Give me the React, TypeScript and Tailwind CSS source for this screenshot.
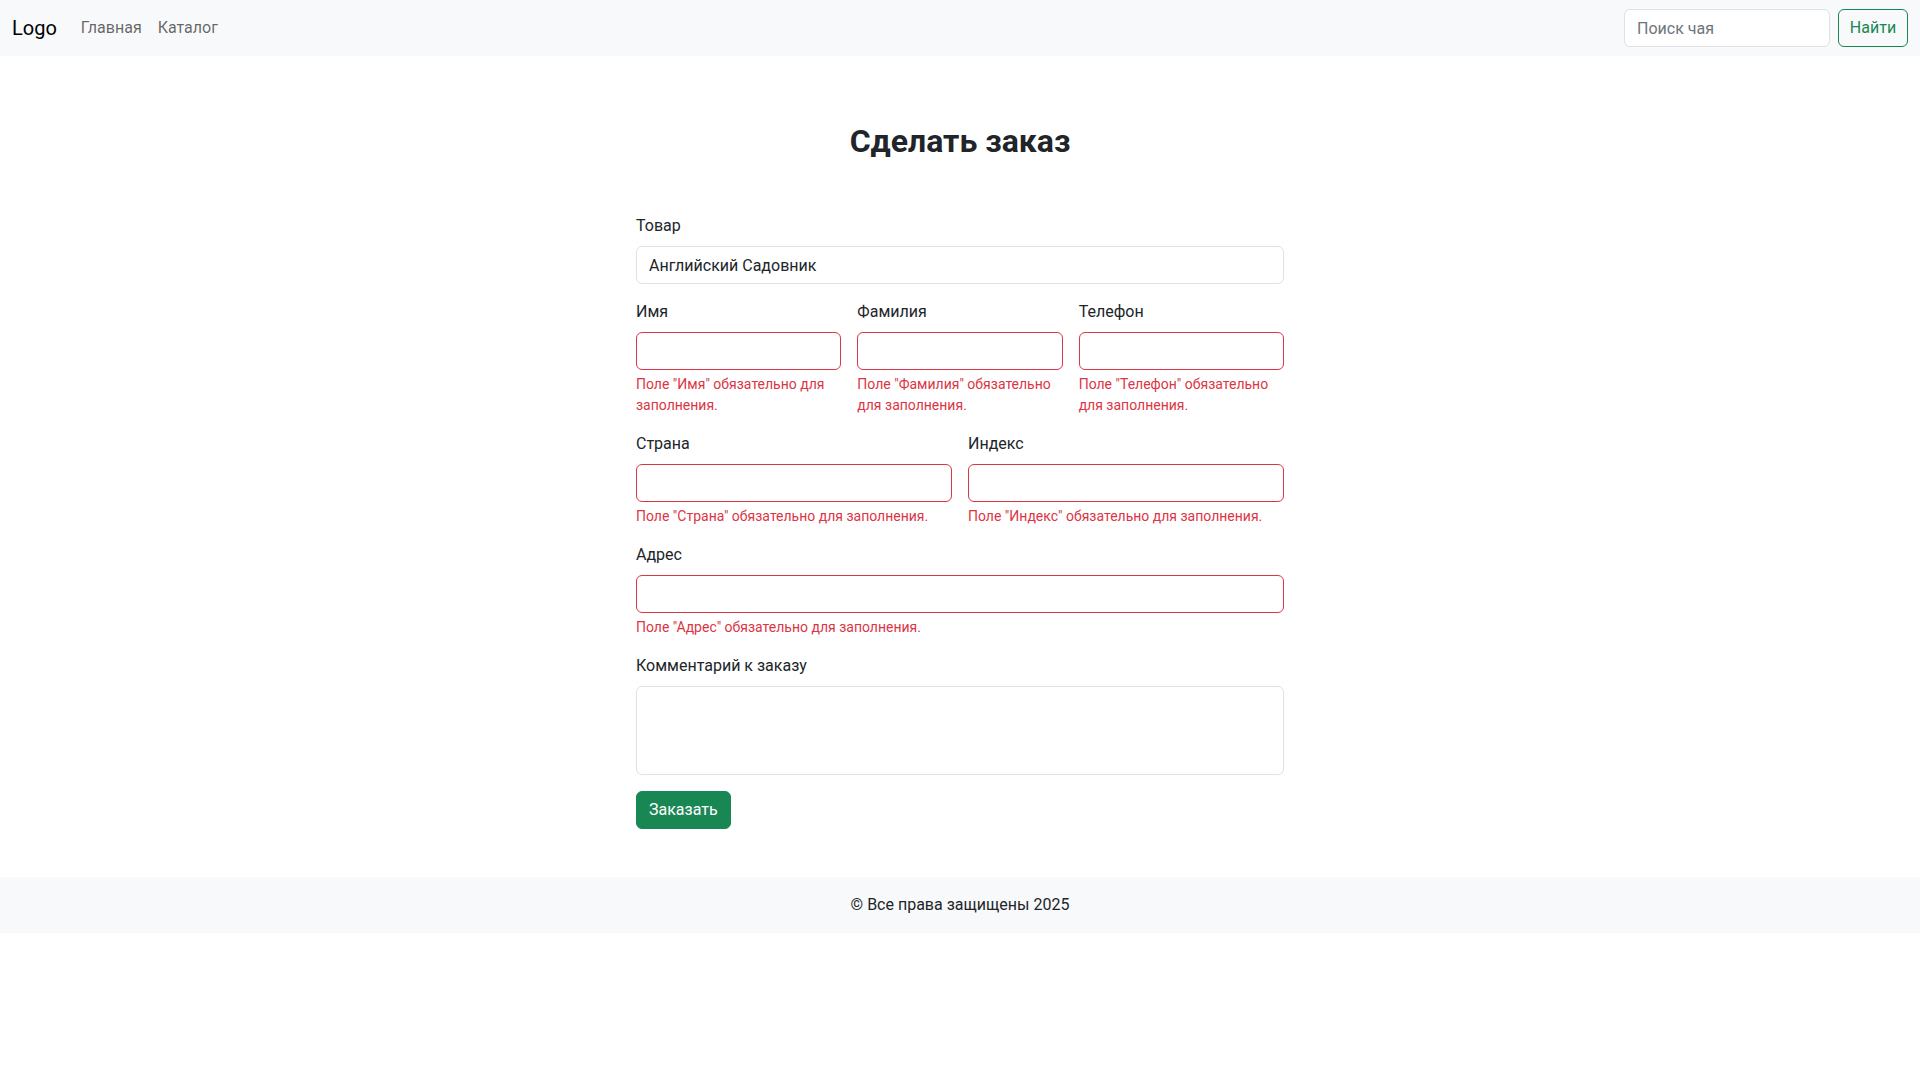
import React from "react";

const font = { fontFamily: '"Segoe UI", Roboto, "Noto Sans", "Liberation Sans", sans-serif' };

function Field({ label, error }: { label: string; error: string }) {
  return (
    <div className="flex flex-col">
      <label className="block mb-2 leading-6 text-base text-[#212529]">{label}</label>
      <input
        type="text"
        className="block w-full h-[38px] px-3 border border-[#dc3545] rounded-md bg-white text-base text-[#212529] outline-none"
      />
      <div className="mt-1 text-[14px] leading-[21px] text-[#dc3545]">{error}</div>
    </div>
  );
}

export default function App() {
  return (
    <div className="min-h-screen bg-white text-[#212529]" style={font}>
      <nav className="h-14 bg-[#f8f9fa] flex items-center px-3">
        <a className="text-xl leading-[30px] mr-4 text-black">Logo</a>
        <ul className="flex items-center">
          <li>
            <a className="block px-2 py-2 leading-6 text-base text-black/60">Главная</a>
          </li>
          <li>
            <a className="block px-2 py-2 leading-6 text-base text-black/60">Каталог</a>
          </li>
        </ul>
        <form className="ml-auto flex items-center" onSubmit={(e) => e.preventDefault()}>
          <input
            type="search"
            placeholder="Поиск чая"
            className="w-[206px] h-[38px] px-3 mr-2 border border-[#dee2e6] rounded-md bg-white text-base text-[#212529] placeholder:text-[#6c757d] outline-none"
          />
          <button
            type="submit"
            className="w-[70px] h-[38px] border border-[#198754] rounded-md text-[#198754] text-base bg-transparent"
          >
            Найти
          </button>
        </form>
      </nav>

      <main className="w-[648px] mx-auto pt-[66px] pb-12">
        <h2 className="text-[32px] font-bold leading-[38px] text-center mb-[54px]">Сделать заказ</h2>

        <div className="mb-4">
          <label className="block mb-2 leading-6 text-base">Товар</label>
          <input
            type="text"
            readOnly
            defaultValue="Английский Садовник"
            className="block w-full h-[38px] px-3 border border-[#dee2e6] rounded-md bg-white text-base text-[#212529] outline-none"
          />
        </div>

        <div className="grid grid-cols-3 gap-x-4 mb-4">
          <Field label="Имя" error={'Поле "Имя" обязательно для заполнения.'} />
          <Field label="Фамилия" error={'Поле "Фамилия" обязательно для заполнения.'} />
          <Field label="Телефон" error={'Поле "Телефон" обязательно для заполнения.'} />
        </div>

        <div className="grid grid-cols-2 gap-x-4 mb-4">
          <Field label="Страна" error={'Поле "Страна" обязательно для заполнения.'} />
          <Field label="Индекс" error={'Поле "Индекс" обязательно для заполнения.'} />
        </div>

        <div className="mb-4">
          <Field label="Адрес" error={'Поле "Адрес" обязательно для заполнения.'} />
        </div>

        <div className="mb-4">
          <label className="block mb-2 leading-6 text-base">Комментарий к заказу</label>
          <textarea className="block w-full h-[89px] px-3 py-1.5 border border-[#dee2e6] rounded-md bg-white text-base resize-none outline-none" />
        </div>

        <button
          type="button"
          className="h-[38px] px-3 bg-[#198754] text-white text-base rounded-md border border-[#198754]"
        >
          Заказать
        </button>
      </main>

      <footer className="bg-[#f8f9fa] py-4 text-center leading-6 text-base">
        © Все права защищены 2025
      </footer>
    </div>
  );
}
